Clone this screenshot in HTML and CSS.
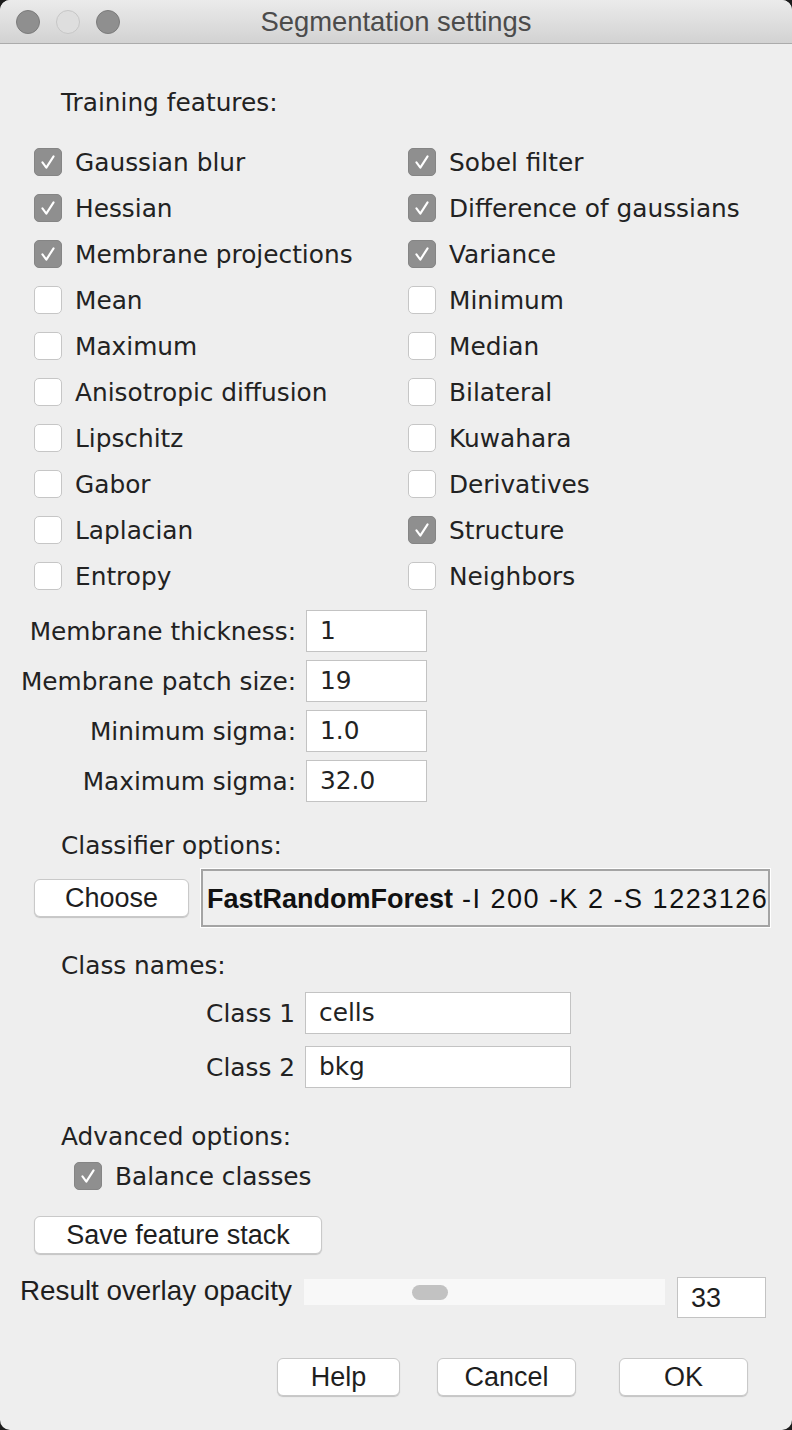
FILE: index.html
```html
<!DOCTYPE html>
<html>
<head>
<meta charset="utf-8">
<title>Segmentation settings</title>
<link rel="stylesheet" href="styles.css">
</head>
<body>
<div class="window">
  <div class="titlebar">
    <div class="lights">
      <span class="light dark"></span>
      <span class="light pale"></span>
      <span class="light dark"></span>
    </div>
    <div class="title">Segmentation settings</div>
    <div></div>
  </div>

  <div class="content">
    <div class="heading first">Training features:</div>

    <div class="features">
      <label class="cb"><span class="box on"><svg viewBox="0 0 28 28"><path d="M8 14.5 L12.2 20 L20 8"/></svg></span>Gaussian blur</label>
      <label class="cb"><span class="box on"><svg viewBox="0 0 28 28"><path d="M8 14.5 L12.2 20 L20 8"/></svg></span>Sobel filter</label>
      <label class="cb"><span class="box on"><svg viewBox="0 0 28 28"><path d="M8 14.5 L12.2 20 L20 8"/></svg></span>Hessian</label>
      <label class="cb"><span class="box on"><svg viewBox="0 0 28 28"><path d="M8 14.5 L12.2 20 L20 8"/></svg></span>Difference of gaussians</label>
      <label class="cb"><span class="box on"><svg viewBox="0 0 28 28"><path d="M8 14.5 L12.2 20 L20 8"/></svg></span>Membrane projections</label>
      <label class="cb"><span class="box on"><svg viewBox="0 0 28 28"><path d="M8 14.5 L12.2 20 L20 8"/></svg></span>Variance</label>
      <label class="cb"><span class="box"></span>Mean</label>
      <label class="cb"><span class="box"></span>Minimum</label>
      <label class="cb"><span class="box"></span>Maximum</label>
      <label class="cb"><span class="box"></span>Median</label>
      <label class="cb"><span class="box"></span>Anisotropic diffusion</label>
      <label class="cb"><span class="box"></span>Bilateral</label>
      <label class="cb"><span class="box"></span>Lipschitz</label>
      <label class="cb"><span class="box"></span>Kuwahara</label>
      <label class="cb"><span class="box"></span>Gabor</label>
      <label class="cb"><span class="box"></span>Derivatives</label>
      <label class="cb"><span class="box"></span>Laplacian</label>
      <label class="cb"><span class="box on"><svg viewBox="0 0 28 28"><path d="M8 14.5 L12.2 20 L20 8"/></svg></span>Structure</label>
      <label class="cb"><span class="box"></span>Entropy</label>
      <label class="cb"><span class="box"></span>Neighbors</label>
    </div>

    <div class="params">
      <div class="plabel">Membrane thickness:</div><div class="field">1</div>
      <div class="plabel">Membrane patch size:</div><div class="field">19</div>
      <div class="plabel">Minimum sigma:</div><div class="field">1.0</div>
      <div class="plabel">Maximum sigma:</div><div class="field">32.0</div>
    </div>

    <div class="heading classifier-h">Classifier options:</div>
    <div class="classifier-row">
      <div class="btn choose">Choose</div>
      <div class="clsfield"><b>FastRandomForest</b><span class="opts"> -I 200 -K 2 -S 1223126</span></div>
    </div>

    <div class="heading classnames-h">Class names:</div>
    <div class="classes">
      <div class="plabel">Class 1</div><div class="field wide">cells</div>
      <div class="plabel">Class 2</div><div class="field wide">bkg</div>
    </div>

    <div class="heading advanced-h">Advanced options:</div>
    <label class="cb balance"><span class="box on"><svg viewBox="0 0 28 28"><path d="M8 14.5 L12.2 20 L20 8"/></svg></span>Balance classes</label>

    <div class="btn save">Save feature stack</div>

    <div class="opacity-row">
      <div class="olabel">Result overlay opacity</div>
      <div class="track"><span class="thumb"></span></div>
      <div class="ofield">33</div>
    </div>

    <div class="actions">
      <div class="btn help">Help</div>
      <div class="btn cancel">Cancel</div>
      <div class="btn ok">OK</div>
    </div>
  </div>
</div>
</body>
</html>
```

FILE: styles.css
```css
* { box-sizing: border-box; }
html, body { margin: 0; padding: 0; }
body {
  background: #1c1c1c;
  width: 792px;
  height: 1430px;
  overflow: hidden;
}
.window {
  width: 792px;
  height: 1430px;
  background: #eeeeee;
  border-radius: 10px;
  overflow: hidden;
  font-family: "DejaVu Sans", "Liberation Sans", sans-serif;
  font-size: 24.8px;
  color: #222;
}
.titlebar {
  height: 44px;
  background: linear-gradient(#ebebeb, #d2d2d2);
  border-bottom: 1px solid #ababab;
  display: grid;
  grid-template-columns: 1fr auto 1fr;
  align-items: center;
}
.lights {
  display: flex;
  gap: 16px;
  padding-left: 16px;
  padding-top: 1px;
}
.light {
  width: 24px;
  height: 24px;
  border-radius: 50%;
  display: block;
}
.light.dark { background: #8f8f8f; border: 1px solid #7b7b7b; }
.light.pale { background: #dedede; border: 1px solid #c6c6c6; }
.title {
  font-family: "Liberation Sans", Arial, sans-serif;
  font-size: 27.4px;
  color: #4b4b4b;
  padding-top: 1px;
}

.content { display: flex; flex-direction: column; }

.heading {
  height: 28px;
  line-height: 28px;
  padding-left: 61px;
}
.heading.first { margin-top: 45px; }

.features {
  margin-top: 22px;
  padding-left: 34px;
  display: grid;
  grid-template-columns: 374px 1fr;
  grid-auto-rows: 46px;
}
.cb {
  display: flex;
  align-items: center;
  gap: 13px;
  white-space: nowrap;
}
.box {
  width: 28px;
  height: 28px;
  border-radius: 5px;
  background: #fff;
  border: 1px solid #c6c6c6;
  flex: none;
  display: flex;
}
.box.on {
  background: #8f8f8f;
  border-color: #858585;
}
.box svg { width: 26px; height: 26px; }
.box path {
  fill: none;
  stroke: #fff;
  stroke-width: 2.3;
  stroke-linecap: round;
  stroke-linejoin: round;
}

.params {
  margin-top: 11px;
  display: grid;
  grid-template-columns: 296px 121px;
  column-gap: 10px;
  row-gap: 8px;
  grid-auto-rows: 42px;
}
.plabel {
  text-align: right;
  align-self: center;
  white-space: nowrap;
}
.field {
  background: #fff;
  border: 1px solid #c3c3c3;
  padding-left: 13px;
  line-height: 40px;
}

.classifier-h { margin-top: 30px; }
.classifier-row {
  margin-top: 9px;
  height: 58px;
  display: flex;
  align-items: center;
  padding-left: 34px;
  gap: 12px;
}
.btn {
  background: #fff;
  border-radius: 6px;
  border: 1px solid #c9c9c9;
  box-shadow: 0 1px 1px rgba(0,0,0,0.18);
  height: 38px;
  line-height: 36px;
  text-align: center;
  font-family: "Liberation Sans", Arial, sans-serif;
  font-size: 27px;
  color: #1e1e1e;
}
.btn.choose { width: 155px; flex: none; }
.clsfield {
  width: 569px;
  height: 58px;
  flex: none;
  border: 2px solid #a4a4a4;
  outline: 1px solid #fff;
  background: #efefef;
  font-family: "Liberation Sans", Arial, sans-serif;
  font-size: 27px;
  color: #111;
  line-height: 56px;
  padding-left: 4px;
  white-space: nowrap;
  overflow: hidden;
}
.clsfield b { font-weight: bold; }
.clsfield .opts { letter-spacing: 1.5px; }

.classnames-h { margin-top: 25px; }
.classes {
  margin-top: 12px;
  display: grid;
  grid-template-columns: 295px 266px;
  column-gap: 10px;
  row-gap: 12px;
  grid-auto-rows: 42px;
}
.field.wide { padding-left: 13px; }

.advanced-h { margin-top: 35px; }
.cb.balance {
  margin-top: 11px;
  padding-left: 74px;
  height: 28px;
}

.btn.save {
  margin-top: 26px;
  margin-left: 34px;
  width: 288px;
}

.opacity-row {
  margin-top: 23px;
  display: flex;
  align-items: flex-start;
  padding-left: 20px;
}
.olabel {
  width: 284px;
  font-family: "Liberation Sans", Arial, sans-serif;
  font-size: 27.8px;
  line-height: 28px;
  margin-top: 0;
  white-space: nowrap;
  color: #1e1e1e;
}
.track {
  width: 361px;
  height: 26px;
  margin-top: 2px;
  background: #f8f8f8;
  display: flex;
  align-items: center;
  padding-left: 108px;
}
.thumb {
  width: 36px;
  height: 15px;
  border-radius: 8px;
  background: #c2c2c2;
  display: block;
}
.ofield {
  margin-left: 12px;
  width: 89px;
  height: 41px;
  background: #fff;
  border: 1px solid #c3c3c3;
  font-family: "Liberation Sans", Arial, sans-serif;
  font-size: 27px;
  line-height: 41px;
  padding-left: 13px;
  color: #1e1e1e;
}

.actions {
  margin-top: 40px;
  display: flex;
  padding-left: 277px;
}
.btn.help { width: 123px; }
.btn.cancel { width: 139px; margin-left: 37px; }
.btn.ok { width: 129px; margin-left: 43px; }
```
